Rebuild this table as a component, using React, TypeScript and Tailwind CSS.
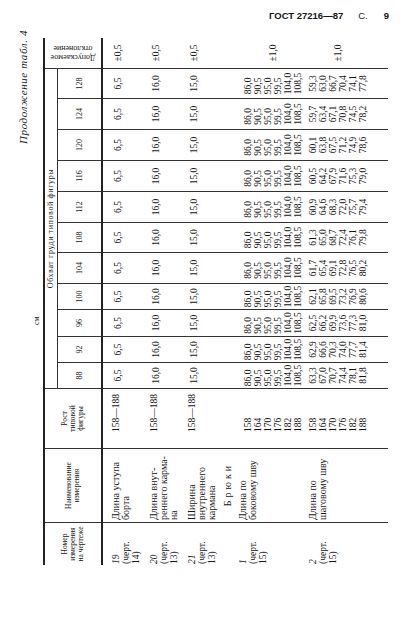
import React from "react";

const chest = [88, 92, 96, 100, 104, 108, 112, 116, 120, 124, 128];
const row1Vals = ["86,0", "90,5", "95,0", "99,5", "104,0", "108,5"];
const heights = ["158", "164", "170", "176", "182", "188"];

function fmt(n: number) {
  return (Math.round(n * 10) / 10).toFixed(1).replace(".", ",");
}

function row2Vals(i: number) {
  return [0, 1, 2, 3, 4, 5].map((j) => fmt(63.3 - 0.4 * i + 3.7 * j));
}

function Stack({ lines }: { lines: string[] }) {
  return (
    <div className="flex justify-center">
      <div className="leading-[10px]">
        {lines.map((l, k) => (
          <div key={k}>{l}</div>
        ))}
      </div>
    </div>
  );
}

function BodyCol({
  cls,
  r19,
  r20,
  r21,
  br,
  r1,
  r2,
}: {
  cls: string;
  r19?: React.ReactNode;
  r20?: React.ReactNode;
  r21?: React.ReactNode;
  br?: React.ReactNode;
  r1?: React.ReactNode;
  r2?: React.ReactNode;
}) {
  return (
    <div className={"flex flex-col " + cls}>
      <div className="h-[37px] shrink-0">{r19}</div>
      <div className="h-[38px] shrink-0">{r20}</div>
      <div className="h-[38px] shrink-0">{r21}</div>
      <div className="h-[17px] shrink-0">{br}</div>
      <div className="h-[70px] shrink-0">{r1}</div>
      <div className="h-[85px] shrink-0">{r2}</div>
    </div>
  );
}

export default function App() {
  return (
    <div className="w-[419px] h-[625px] overflow-hidden bg-white text-[#161616]">
      <div className="flex h-[25px] items-start justify-end pt-[10px] pr-[30px] text-[9.5px] leading-[12px] font-['Liberation_Sans',Arial,sans-serif]">
        <span className="font-bold">ГОСТ 27216—87</span>
        <span className="ml-[15px]">С.</span>
        <span className="ml-[16px] font-bold">9</span>
      </div>
      <div className="h-[600px] w-[419px] overflow-hidden">
        <div className="w-[600px] h-[419px] origin-top-left [transform:translateY(600px)_rotate(-90deg)] font-['Liberation_Serif','Times_New_Roman',serif]">
          <div className="pt-[16px] pr-[5px] text-right italic text-[11px] leading-[14px] tracking-[0.6px]">
            Продолжение табл. 4
          </div>
          <div className="pl-[300px] text-[8px] leading-[13px]">см</div>

          <div className="ml-[60px] w-[527px] border-t-2 border-[#222]">
            {/* header */}
            <div className="grid grid-cols-[43px_74px_60px_26px_26px_27px_26px_31px_30px_31px_31px_31px_31px_30px_30px] grid-rows-[13px_43px] border-b-2 border-[#222] text-[7.5px] leading-[8px]">
              <div className="row-span-2 flex items-center justify-center text-center border-r border-[#333]">
                Номер
                <br />
                измерения
                <br />
                на чертеже
              </div>
              <div className="row-span-2 flex items-center justify-center text-center border-r border-[#333]">
                Наименование
                <br />
                измерения
              </div>
              <div className="row-span-2 flex items-center justify-center text-center border-r border-[#333]">
                Рост
                <br />
                типовой
                <br />
                фигуры
              </div>
              <div className="col-span-11 flex items-center justify-center border-b border-r border-[#333] text-[8px] tracking-[0.6px]">
                Обхват груди типовой фигуры
              </div>
              <div className="row-span-2 flex items-center justify-center">
                <div className="-rotate-90 whitespace-nowrap text-center text-[8px] leading-[9px]">
                  Допускаемое
                  <br />
                  отклонение
                </div>
              </div>
              {chest.map((c) => (
                <div
                  key={c}
                  className="flex items-center justify-center border-r border-[#333] text-[8px]"
                >
                  {c}
                </div>
              ))}
            </div>

            {/* body */}
            <div className="grid grid-cols-[43px_74px_60px_26px_26px_27px_26px_31px_30px_31px_31px_31px_31px_30px_30px] h-[285px] text-[9.5px] leading-[10px]">
              <BodyCol
                cls="border-r border-[#333] pl-[1px]"
                r19={
                  <div className="pt-[8px]">
                    <i>19</i>
                    <br />
                    (черт.
                    <br />
                    14)
                  </div>
                }
                r20={
                  <div className="pt-[9px]">
                    <i>20</i>
                    <br />
                    (черт.
                    <br />
                    13)
                  </div>
                }
                r21={
                  <div className="pt-[9px]">
                    <i>21</i>
                    <br />
                    (черт.
                    <br />
                    13)
                  </div>
                }
                r1={
                  <div className="pt-[5px]">
                    <i>1</i>
                    <br />
                    (черт.
                    <br />
                    15)
                  </div>
                }
                r2={
                  <div className="pt-[5px]">
                    <i>2</i>
                    <br />
                    (черт.
                    <br />
                    15)
                  </div>
                }
              />
              <BodyCol
                cls="border-r border-[#333] pl-[2px]"
                r19={
                  <div className="pt-[8px] text-[10px]">
                    Длина уступа
                    <br />
                    борта
                  </div>
                }
                r20={
                  <div className="pt-[9px] text-[10px]">
                    Длина внут-
                    <br />
                    реннего карма-
                    <br />
                    на
                  </div>
                }
                r21={
                  <div className="pt-[9px] text-[10px]">
                    Ширина
                    <br />
                    внутреннего
                    <br />
                    кармана
                  </div>
                }
                br={
                  <div className="pt-[7px] text-center text-[10px] tracking-[3px]">
                    Брюки
                  </div>
                }
                r1={
                  <div className="pt-[5px] text-[10px]">
                    Длина по
                    <br />
                    боковому шву
                  </div>
                }
                r2={
                  <div className="pt-[5px] text-[10px]">
                    Длина по
                    <br />
                    шаговому шву
                  </div>
                }
              />
              <BodyCol
                cls="border-r border-[#333] pl-[16px]"
                r19={<div className="pt-[8px]">158—188</div>}
                r20={<div className="pt-[9px]">158—188</div>}
                r21={<div className="pt-[9px]">158—188</div>}
                r1={
                  <div className="pt-[10px]">
                    {heights.map((h) => (
                      <div key={h}>{h}</div>
                    ))}
                  </div>
                }
                r2={
                  <div className="pt-[5px]">
                    {heights.map((h) => (
                      <div key={h}>{h}</div>
                    ))}
                  </div>
                }
              />
              {chest.map((c, i) => (
                <BodyCol
                  key={c}
                  cls="border-r border-[#333]"
                  r19={<div className="pt-[10px] text-center">6,5</div>}
                  r20={<div className="pt-[11px] text-center">16,0</div>}
                  r21={<div className="pt-[11px] text-center">15,0</div>}
                  r1={
                    <div className="pt-[10px]">
                      <Stack lines={row1Vals} />
                    </div>
                  }
                  r2={
                    <div className="pt-[5px]">
                      <Stack lines={row2Vals(i)} />
                    </div>
                  }
                />
              ))}
              <BodyCol
                cls=""
                r19={<div className="pt-[10px] text-center">±0,5</div>}
                r20={<div className="pt-[11px] text-center">±0,5</div>}
                r21={<div className="pt-[11px] text-center">±0,5</div>}
                r1={
                  <div className="mt-[10px] flex h-[60px] items-center justify-center">
                    ±1,0
                  </div>
                }
                r2={
                  <div className="mt-[5px] flex h-[60px] items-center justify-center">
                    ±1,0
                  </div>
                }
              />
            </div>
          </div>
        </div>
      </div>
    </div>
  );
}
